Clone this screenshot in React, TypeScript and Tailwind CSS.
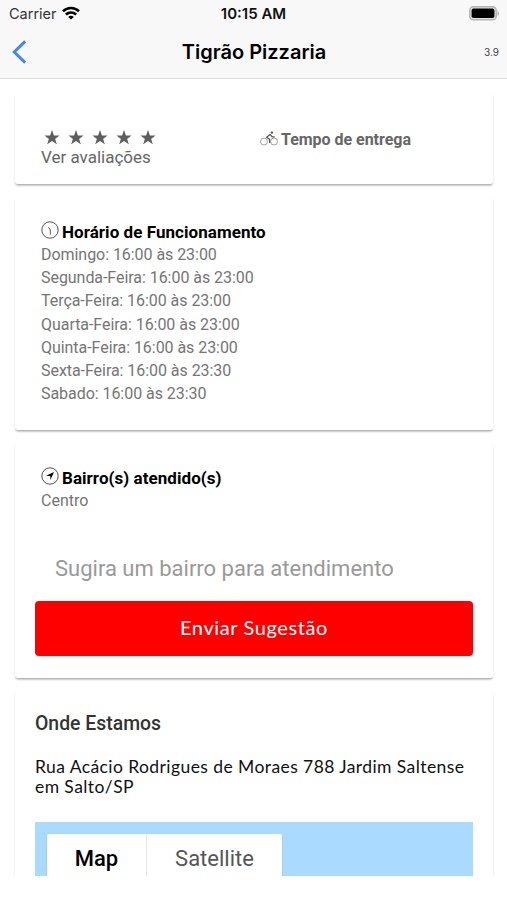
import { ReactNode } from "react";

const hours = [
    "Domingo: 16:00 às 23:00",
    "Segunda-Feira: 16:00 às 23:00",
    "Terça-Feira: 16:00 às 23:00",
    "Quarta-Feira: 16:00 às 23:00",
    "Quinta-Feira: 16:00 às 23:00",
    "Sexta-Feira: 16:00 às 23:30",
    "Sabado: 16:00 às 23:30",
];

const Card = ({ className, children }: { className: string; children: ReactNode }) => {
    return (
        <div className={"mx-[15px] w-[478px] shrink-0 rounded-[3px] bg-white shadow-[0_2px_2px_-1px_rgba(0,0,0,0.22),0_1.5px_2px_rgba(0,0,0,0.15)] " + className}>
            {children}
        </div>
    )
}

const WifiIcon = () => (
    <svg width="18" height="14" viewBox="0 0 18 14" fill="none" stroke="#000" strokeWidth="2.6">
        <path d="M1 5.2C5.6.9 12.4.9 17 5.2"/>
        <path d="M3.9 8.5C6.8 5.8 11.2 5.8 14.1 8.5"/>
        <path d="M9 13.6L6.2 10.9C7.8 9.4 10.2 9.4 11.8 10.9Z" fill="#000" stroke="none"/>
    </svg>
)

const BatteryIcon = () => (
    <svg width="31" height="15" viewBox="0 0 31 15">
        <rect x=".8" y=".8" width="26.4" height="13" rx="3.6" fill="#e2e2e2" stroke="#b4b4b4" strokeWidth="1.5"/>
        <rect x="2.6" y="2.6" width="22.8" height="9.4" rx="1.8" fill="#000"/>
        <path d="M28.5 5v4.8c1-.4 1.6-1.3 1.6-2.4S29.5 5.4 28.5 5Z" fill="#b4b4b4"/>
    </svg>
)

const StarIcon = () => (
    <svg width="16" height="15" viewBox="0 0 16 15" fill="#5d5d5d">
        <path d="M8 0l1.9 5.5h5.6L11.1 9l1.7 5.3L8 11.1l-4.8 3.2L4.9 9 .5 5.5h5.600Z"/>
    </svg>
)

const BikeIcon = () => (
    <svg width="18" height="15" viewBox="0 0 18 15" fill="none" stroke="#999" strokeWidth=".9">
        <circle cx="4" cy="10.5" r="3.5"/>
        <circle cx="14" cy="10.5" r="3.5"/>
        <path d="M10.400 3.200L6.600 6.300l3 2v3.800M10.400 3.700l1.700 2.100h2.600" stroke="#555" strokeWidth="1.3" strokeLinejoin="round"/>
        <circle cx="11.9" cy="1.6" r="1.2" fill="#555" stroke="none"/>
    </svg>
)

const ClockIcon = () => (
    <svg width="18" height="18" viewBox="0 0 18 18" fill="none" stroke="#555" strokeWidth="1">
        <circle cx="9" cy="9" r="8.2"/>
        <path d="M7.6 6.3L9.3 9v4.6"/>
    </svg>
)

const NavigateIcon = () => (
    <svg width="18" height="18" viewBox="0 0 18 18" fill="none" stroke="#555" strokeWidth="1">
        <circle cx="9" cy="9" r="8.2"/>
        <path d="M13 5L9.3 13V8.9L5 8.7Z" fill="#000" stroke="none"/>
    </svg>
)

const App = () => {
    return (
        <div className="flex h-[900px] w-[507px] flex-col overflow-hidden bg-white font-['Roboto',sans-serif]">
            <header className="flex h-[79px] shrink-0 flex-col border-b border-[#dcdcdc] bg-[#f8f8f8] font-['Inter',sans-serif]">
                <div className="grid h-[27px] grid-cols-3 items-center pl-[9px] pr-[7px]">
                    <div className="flex items-center gap-[5px]">
                        <span className="pt-px text-[14.5px] text-[#333]">Carrier</span>
                        <div className="pb-px"><WifiIcon/></div>
                    </div>
                    <span className="pr-0.5 pt-px text-center text-[15px] font-semibold text-[#111]">10:15 AM</span>
                    <div className="flex justify-end"><BatteryIcon/></div>
                </div>
                <div className="grid h-[51px] grid-cols-[60px_1fr_60px] items-center pb-px pl-3 pr-2">
                    <svg width="15" height="24" viewBox="0 0 15 24" fill="none" stroke="#4285f4" strokeWidth="2.9">
                        <path d="M13.2 1.4L2.2 12l11 10.6"/>
                    </svg>
                    <h1 className="pr-[3px] text-center text-[20px] font-semibold">Tigrão Pizzaria</h1>
                    <span className="text-right text-[10px] text-[#444]">3.9</span>
                </div>
            </header>

            <main className="flex h-[797px] shrink-0 flex-col gap-3.5 overflow-hidden pt-[15px]">
                <Card className="flex h-[90px] text-[#666]">
                    <div className="flex w-[245px] flex-col pl-[26px] pt-9">
                        <div className="flex gap-2 pl-[3px]">
                            {[1, 2, 3, 4, 5].map((n) => <StarIcon key={n}/>)}
                        </div>
                        <span className="text-[17px] leading-6">Ver avaliações</span>
                    </div>
                    <div className="flex h-[90px] items-center gap-[3px]">
                        <div className="pb-0.5"><BikeIcon/></div>
                        <span className="pt-0.5 text-[16px] font-bold tracking-[-0.03px]">Tempo de entrega</span>
                    </div>
                </Card>

                <Card className="h-[232px] pl-[26px] pt-[23px]">
                    <div className="flex h-[22px] items-center gap-[3px]">
                        <div className="pb-1"><ClockIcon/></div>
                        <h2 className="pt-0.5 text-[17px] font-bold tracking-[0.05px]">Horário de Funcionamento</h2>
                    </div>
                    {hours.map((line) => (
                        <p key={line} className="text-[16px] leading-[23.2px] tracking-[-0.05px] text-[#757575]">{line}</p>
                    ))}
                </Card>

                <Card className="h-[234px] px-5 pt-[23px]">
                    <div className="flex h-[22px] items-center gap-[3px] pl-1.5">
                        <div className="pb-1"><NavigateIcon/></div>
                        <h2 className="pt-0.5 text-[17px] font-bold tracking-[0.05px]">Bairro(s) atendido(s)</h2>
                    </div>
                    <p className="pl-1.5 text-[16px] leading-[23px] text-[#757575]">Centro</p>
                    <input
                        type="text"
                        placeholder="Sugira um bairro para atendimento"
                        className="mt-[35px] h-[42px] w-full px-5 text-[22px] outline-none placeholder:text-[#999]"
                    />
                    <button type="button" className="mt-3 h-[55px] w-full rounded-[4px] bg-[#ff0000] pb-1 font-['Lato',sans-serif] text-[20px] tracking-[0.6px] text-white">
                        Enviar Sugestão
                    </button>
                </Card>

                <Card className="h-[400px] px-5 pt-[18px]">
                    <h2 className="text-[19.4px] font-medium leading-[27px] text-[#333]">Onde Estamos</h2>
                    <p className="mt-5 whitespace-nowrap font-['Lato',sans-serif] text-[17.5px] leading-5 tracking-[0.42px] text-[#111]">
                        Rua Acácio Rodrigues de Moraes 788 Jardim Saltense<br/>em Salto/SP
                    </p>
                    <div className="mt-[25px] h-[280px] bg-[#aadaff] pl-3 pt-[11.5px]">
                        <div className="flex h-[50px] w-[235px] rounded-[2px] bg-white text-[22px] leading-[48px] shadow-[0_1px_2px_rgba(0,0,0,0.15)]">
                            <button type="button" className="w-[100px] border-r border-[#e6e6e6] font-medium text-black">Map</button>
                            <button type="button" className="flex-1 text-[#565656]">Satellite</button>
                        </div>
                    </div>
                </Card>
            </main>
        </div>
    )
}
export default App;
